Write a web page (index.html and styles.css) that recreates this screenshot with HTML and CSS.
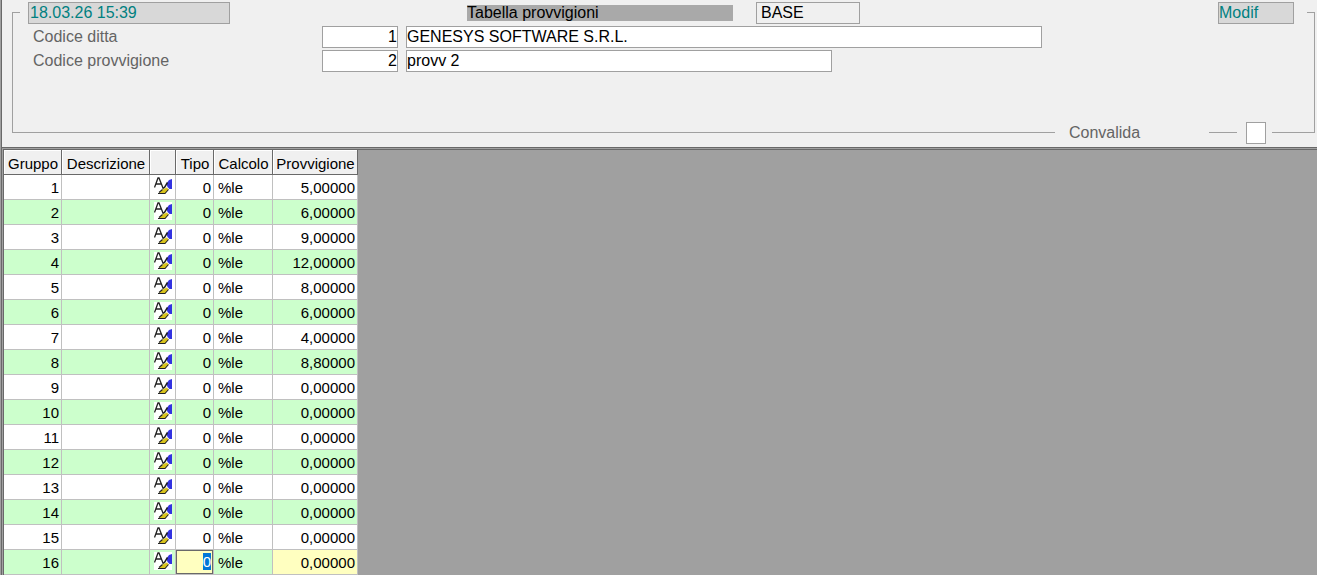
FILE: index.html
```
<!DOCTYPE html>
<html lang="it">
  <head>
    <meta charset="UTF-8" />
    <meta name="viewport" content="width=device-width, initial-scale=1.0" />
    <title>Tabella provvigioni</title>
    <link rel="stylesheet" href="styles.css">
  </head>
  <body>
    <svg class="icon-defs" aria-hidden="true">
      <symbol id="edit-icon" viewBox="0 0 18 18">
        <rect width="18" height="18" fill="#fff" />
        <path d="M0.5 10.5 L4 1 H5 L9 11 M2 7 H7.5" fill="none" stroke="#222" stroke-width="1.3" />
        <path d="M18 2 L15 3 L12.5 6.5 L13.5 10 L15.5 12 H18 Z" fill="#3333e0" />
        <path d="M8.5 11.5 L10.5 10.5 L13.5 5.5" fill="none" stroke="#222" stroke-width="1.5" />
        <path d="M4.5 16.5 L8.5 12.5 L13 10.5 L14.5 12.5 L11 16.5 Z" fill="#d9c31c" />
        <path d="M4 16.5 H11 L14.5 12.5 M5 15.5 L8.5 12.5" fill="none" stroke="#222" stroke-width="1.1" />
      </symbol>
    </svg>

    <div class="window">
      <form class="panel">
        <fieldset class="frame">
          <legend class="title-row">
            <input class="field date" type="text" value="18.03.26 15:39" aria-label="Data" readonly />
            <span class="title">Tabella provvigioni</span>
            <input class="field base" type="text" value="BASE" aria-label="Archivio" readonly />
            <input class="field mode" type="text" value="Modif" aria-label="Stato" readonly />
          </legend>
          <div class="form-row">
            <label for="ditta">Codice ditta</label>
            <input class="field code" id="ditta" type="text" value="1" />
            <input class="field company" type="text" value="GENESYS SOFTWARE S.R.L." aria-label="Ragione sociale" />
          </div>
          <div class="form-row">
            <label for="provvigione">Codice provvigione</label>
            <input class="field code" id="provvigione" type="text" value="2" />
            <input class="field description" type="text" value="provv 2" aria-label="Descrizione provvigione" />
          </div>
        </fieldset>
        <div class="confirm-row">
          <span class="line line-left"></span>
          <label for="convalida">Convalida</label>
          <span class="line line-middle"></span>
          <input class="confirm" id="convalida" type="checkbox" />
          <span class="line line-right"></span>
        </div>
      </form>

      <div class="grid">
        <table>
          <colgroup>
            <col class="col-group" />
            <col class="col-desc" />
            <col class="col-icon" />
            <col class="col-type" />
            <col class="col-calc" />
            <col class="col-rate" />
          </colgroup>
          <thead>
            <tr>
              <th>Gruppo</th>
              <th>Descrizione</th>
              <th></th>
              <th>Tipo</th>
              <th>Calcolo</th>
              <th>Provvigione</th>
            </tr>
          </thead>
          <tbody id="rows"></tbody>
        </table>
      </div>
    </div>

    <script src="script.js"></script>
  </body>
</html>
```
FILE: styles.css
```
* {
  box-sizing: border-box;
}

body {
  margin: 0;
  background: #a0a0a0;
  color: #000;
  font-family: "Liberation Sans", Arial, sans-serif;
  font-size: 16px;
}

.icon-defs {
  display: none;
}

.window {
  margin-left: 1px;
  border-left: 1px solid #696969;
}

/* header form */
.panel {
  background: #f0f0f0;
  border-bottom: 1px solid #696969;
  padding: 0 2px 3px 10px;
}

.frame {
  min-height: 132px;
  margin: 0;
  padding: 0 7px;
  border: 1px solid #a0a0a0;
  border-bottom: none;
}

.title-row {
  display: flex;
  align-items: center;
  width: 100%;
  padding: 2px 13px 0 8px;
}

.field {
  height: 22px;
  padding: 0;
  border: 1px solid #a0a0a0;
  border-radius: 0;
  background: #fff;
  color: #000;
  font: inherit;
  outline: none;
}

.date,
.mode {
  background: #d8d8d8;
  color: #008080;
}

.date {
  width: 202px;
  padding-left: 1px;
}

.title {
  width: 266px;
  height: 16px;
  margin: 0 23px 0 237px;
  background: #a9a9a9;
  line-height: 16px;
}

.base {
  width: 104px;
  padding-left: 4px;
  background: #f0f0f0;
}

.mode {
  width: 76px;
  margin-left: auto;
}

.form-row {
  display: flex;
  align-items: center;
  gap: 8px;
  margin: 2px 0 0 13px;
}

label {
  color: #646464;
}

.form-row label {
  width: 281px;
  line-height: 20px;
}

.code {
  width: 76px;
  text-align: right;
}

.company {
  width: 636px;
}

.description {
  width: 426px;
}

.confirm-row {
  display: flex;
  align-items: center;
  margin-top: -10px;
}

.line {
  height: 2px;
  border-top: 1px solid #a0a0a0;
}

.line-left {
  flex: 1;
}

.confirm-row label {
  width: 140px;
  margin-left: 14px;
}

.line-middle {
  width: 28px;
}

.confirm {
  appearance: none;
  width: 20px;
  height: 22px;
  margin: 0 6px 0 9px;
  border: 1px solid #a0a0a0;
  background: #fff;
}

.line-right {
  width: 43px;
}

/* data grid */
.grid {
  margin: 1px 0 0 1px;
  border: 1px solid #696969;
  border-width: 1px 0 0 1px;
}

table {
  width: 354px;
  table-layout: fixed;
  border-collapse: separate;
  border-spacing: 0;
  font-size: 15px;
}

.col-group {
  width: 58px;
}

.col-desc {
  width: 88px;
}

.col-icon {
  width: 26px;
}

.col-type {
  width: 38px;
}

.col-calc {
  width: 59px;
}

.col-rate {
  width: 85px;
}

th {
  height: 25px;
  padding: 2px 0 0 1px;
  border-right: 1px solid #696969;
  border-bottom: 1px solid #696969;
  background: #f0f0f0;
  box-shadow: inset 1px 1px #fff;
  font-weight: normal;
}

td {
  height: 25px;
  padding: 1px 2px 0 4px;
  border-right: 1px solid #c0c0c0;
  border-bottom: 1px solid #c0c0c0;
  background: #fff;
  line-height: 22px;
}

tbody tr:nth-child(even) td {
  background: #ccffcc;
}

.number {
  text-align: right;
}

.icon-cell {
  padding: 0 3px 2px 4px;
}

.icon-cell svg {
  display: block;
  width: 18px;
  height: 18px;
}

tbody tr.current .rate {
  background: #ffffc0;
}

tbody tr .editing {
  padding: 0;
}

.cell-input {
  display: block;
  width: 100%;
  height: 24px;
  padding: 0 1px 2px;
  border: 1px solid #696969;
  border-radius: 0;
  background: #ffffc0;
  font: inherit;
  text-align: right;
  outline: none;
}

.cell-input::selection {
  background: #0078d7;
  color: #fff;
}
```
FILE: script.js
```
const rates = [
  "5,00000", "6,00000", "9,00000", "12,00000",
  "8,00000", "6,00000", "4,00000", "8,80000",
  "0,00000", "0,00000", "0,00000", "0,00000",
  "0,00000", "0,00000", "0,00000", "0,00000",
];
const currentRow = 16;

document.getElementById("rows").innerHTML = rates
  .map((rate, i) => {
    const group = i + 1;
    const isCurrent = group === currentRow;
    const type = isCurrent
      ? `<td class="editing"><input class="cell-input" type="text" value="0" aria-label="Tipo" /></td>`
      : `<td class="number">0</td>`;
    return `<tr class="${isCurrent ? "current" : ""}">
      <td class="number">${group}</td>
      <td></td>
      <td class="icon-cell"><svg><use href="#edit-icon" /></svg></td>
      ${type}
      <td>%le</td>
      <td class="number rate">${rate}</td>
    </tr>`;
  })
  .join("");

const cellInput = document.querySelector(".cell-input");
cellInput.focus();
cellInput.select();
```
